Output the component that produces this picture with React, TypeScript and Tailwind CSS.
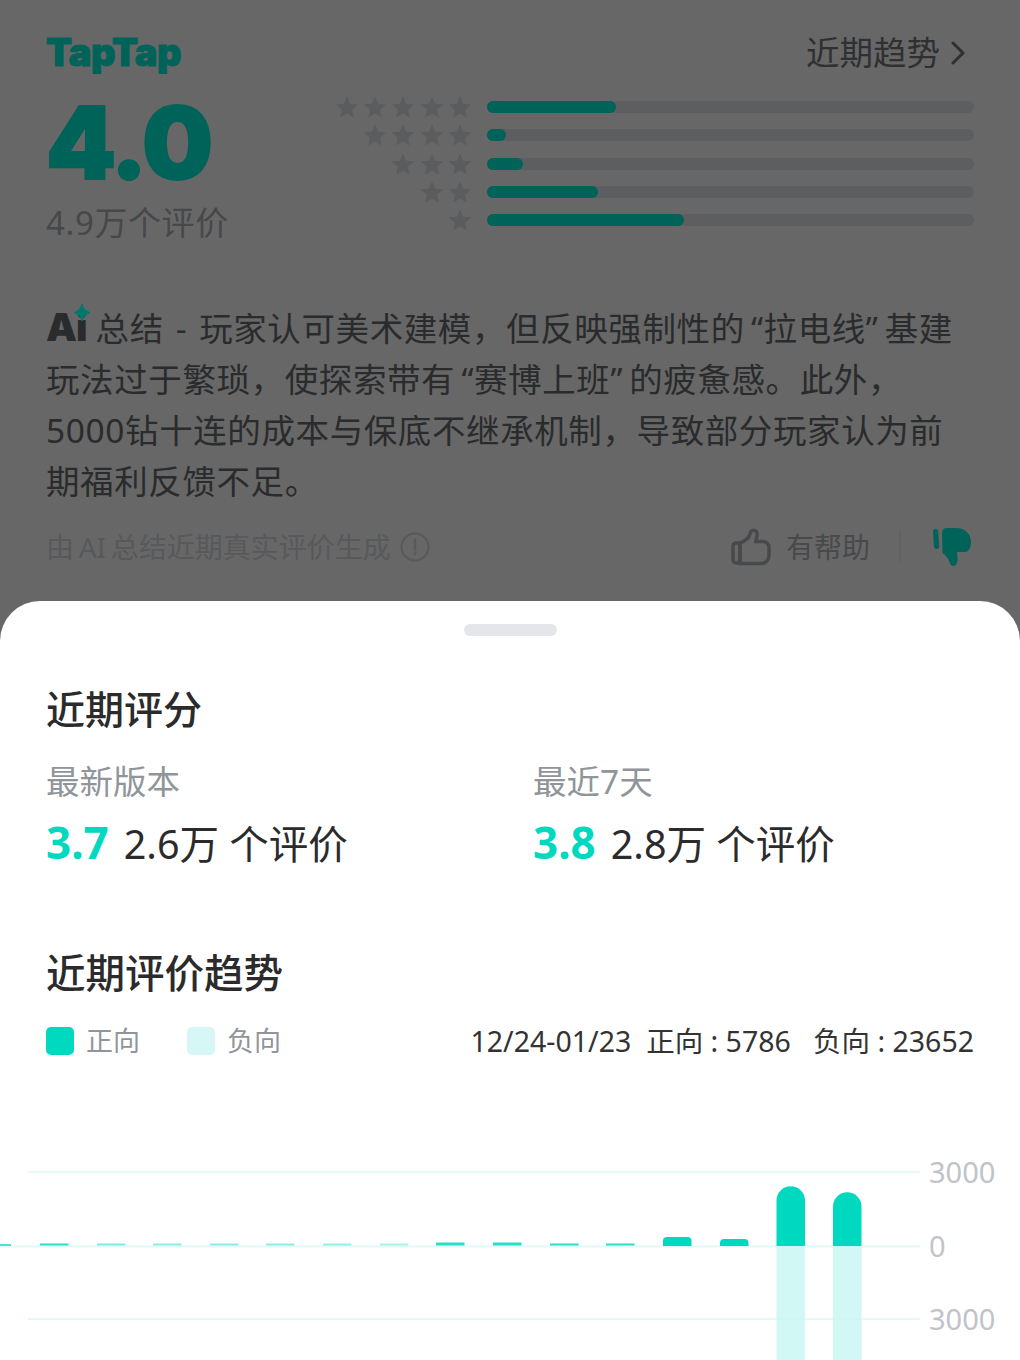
import React from 'react';

const font = 'font-["Noto_Sans","Noto_Sans_CJK_SC",sans-serif]';

const ratingRows = [
  { stars: 5, fill: 129 },
  { stars: 4, fill: 19 },
  { stars: 3, fill: 36 },
  { stars: 2, fill: 111 },
  { stars: 1, fill: 197 },
];

// thin bars along the zero line (y 105 in the svg)
const bars = [
  { x: 40, h: 2, o: 0.85 },
  { x: 97, h: 2, o: 0.5 },
  { x: 153, h: 2, o: 0.45 },
  { x: 210, h: 2, o: 0.45 },
  { x: 266, h: 2, o: 0.45 },
  { x: 323, h: 2, o: 0.4 },
  { x: 380, h: 2, o: 0.35 },
  { x: 436, h: 3, o: 0.85 },
  { x: 493, h: 3, o: 0.85 },
  { x: 550, h: 2, o: 0.85 },
  { x: 606, h: 2, o: 0.85 },
];

const Star: React.FC = () => (
  <svg width="24" height="22" viewBox="0 0 24 22" className="shrink-0">
    <path
      d="M12 0.5l3.2 7.2 7.8.8-5.9 5.2 1.7 7.7L12 17.4l-6.800 4 1.700-7.700L1 8.500l7.800-.8z"
      fill="#5b5c5e"
    />
  </svg>
);

const Chart: React.FC = () => (
  <svg width="1020" height="220" viewBox="0 0 1020 220" className="block">
    <line x1="28" y1="31" x2="920" y2="31" stroke="#e6fbf9" strokeWidth="2" />
    <line x1="0" y1="105.500" x2="920" y2="105.500" stroke="#e0faf7" strokeWidth="2" />
    <rect x="0" y="103" width="11" height="2" fill="#00d9c0" opacity="0.7" />
    {bars.map((b) => (
      <rect key={b.x} x={b.x} y={104.500 - b.h} width="28.500" height={b.h} fill="#00d9c0" opacity={b.o} />
    ))}
    <path d="M663 105v-5a4 4 0 0 1 4-4h20.500a4 4 0 0 1 4 4v5z" fill="#00d9c0" />
    <path d="M720 105v-3a4 4 0 0 1 4-4h20.500a4 4 0 0 1 4 4v3z" fill="#00d9c0" />
    <path d="M776.500 105V59.500a14.250 14.250 0 0 1 28.500 0V105z" fill="#00d9c0" />
    <path d="M833 105V65.500a14.250 14.250 0 0 1 28.500 0V105z" fill="#00d9c0" />
    <rect x="776.500" y="105" width="28.500" height="115" fill="#d2f8f5" />
    <rect x="833" y="105" width="28.500" height="115" fill="#d2f8f5" />
    <line x1="28" y1="178" x2="920" y2="178" stroke="#c9f5f1" strokeOpacity="0.5" strokeWidth="2" />
    <text x="929" y="42" fontSize="29" fill="#c0c3c8">3000</text>
    <text x="929" y="116" fontSize="29" fill="#c0c3c8">0</text>
    <text x="929" y="189" fontSize="29" fill="#c0c3c8">3000</text>
  </svg>
);

export default function App() {
  return (
    <div className={`${font} flex h-[1360px] w-[1020px] flex-col overflow-hidden bg-[#676767]`}>
      {/* dimmed card behind the sheet */}
      <div className="h-[601px] shrink-0 px-[46px] pt-[27px]">
        <div className="flex h-[52px] items-center justify-between">
          <span className="-mt-[2px] font-['Inter',sans-serif] text-[38px] font-black leading-none tracking-[-0.500px] text-[#00635a] [-webkit-text-stroke:1px_#00635a]">
            TapTap
          </span>
          <span className="mr-[9px] flex items-center gap-[11px] text-[33.500px] leading-none text-[#2f3031]">
            近期趋势
            <svg width="14" height="26" viewBox="0 0 14 26" fill="none">
              <path d="M2 3l10 10L2 23" stroke="#2f3031" strokeWidth="3" strokeLinecap="round" strokeLinejoin="round" />
            </svg>
          </span>
        </div>

        <div className="flex justify-between">
          <div className="w-[280px]">
            <div className="mt-[14px] font-['Inter',sans-serif] text-[100px] font-black leading-[100px] tracking-[-2.500px] text-[#00635a] [-webkit-text-stroke:2px_#00635a]">
              4.0
            </div>
            <div className="mt-[9px] text-[33px] leading-[42px] tracking-[0.600px] text-[#47484a]">4.9万个评价</div>
          </div>
          <div className="mt-[17px] flex w-[640px] flex-col gap-[6px]">
            {ratingRows.map((row) => (
              <div key={row.stars} className="flex h-[22.300px] items-center justify-end">
                <div className="flex gap-[4.300px]">
                  {Array.from({ length: row.stars }).map((_, i) => (
                    <Star key={i} />
                  ))}
                </div>
                <div className="ml-[15px] h-[12px] w-[487px] shrink-0 rounded-full bg-[#5d5e60]">
                  <div className="h-full rounded-full bg-[#00635a]" style={{ width: row.fill }} />
                </div>
              </div>
            ))}
          </div>
        </div>

        <div className="mt-[59px] text-[33.500px] leading-[51px] tracking-[0.600px] text-[#2a2b2c]">
          <span className="relative mr-[9px] inline-block font-['Inter',sans-serif] text-[39px] font-black leading-none tracking-[-1px]">
            Ai
            <svg width="16" height="17" viewBox="0 0 16 17" className="absolute -right-[3px] -top-[3px]">
              <path d="M8 0c.800 4 3 6.500 8 8.500-5 2-7.200 4.500-8 8.500-.800-4-3-6.500-8-8.500C5 6.500 7.200 4 8 0z" fill="#00796d" stroke="#00796d" />
            </svg>
          </span>
          总结<span className="mx-[12px]">-</span>玩家认可美术建模，但反映强制性的{'\u2009'}“拉电线”{'\u2009'}基建
          <br />
          玩法过于繁琐，使探索带有{'\u2009'}“赛博上班”{'\u2009'}的疲惫感。此外，
          <br />
          5000钻十连的成本与保底不继承机制，导致部分玩家认为前
          <br />
          期福利反馈不足。
        </div>

        <div className="mt-[20px] flex items-center justify-between">
          <div className="flex items-center gap-[9px] text-[28px] leading-[40px] text-[#58595b]">
            由{'\u2009'}AI{'\u2009'}总结近期真实评价生成
            <svg width="30" height="30" viewBox="0 0 30 30" fill="none">
              <circle cx="15" cy="15" r="13.500" stroke="#58595b" strokeWidth="2" />
              <path d="M15 8v9M15 20.500v1.500" stroke="#58595b" strokeWidth="2.500" strokeLinecap="round" />
            </svg>
          </div>
          <div className="mr-[2px] flex items-center">
            <svg width="40" height="38" viewBox="0 0 40 38" fill="none" stroke="#48494b" strokeWidth="3.500" strokeLinejoin="round" strokeLinecap="round">
              <path d="M9 15H5a3 3 0 0 0-3 3v14a3 3 0 0 0 3 3h4z" />
              <path d="M9 15c5-2 9-5 10-9 .600-3 3-4.500 5-3.500 2.500 1.200 2.500 5 1 9.500l-.5 1.500H32a6 6 0 0 1 6 6v8a8 8 0 0 1-8 8H9z" />
            </svg>
            <span className="ml-[15px] text-[28px] leading-none text-[#48494b]">有帮助</span>
            <div className="ml-[29px] h-[32px] w-[2px] bg-[#606163]" />
            <svg width="40" height="38" viewBox="0 0 40 38" className="ml-[31px]" fill="#00635a">
              <path d="M1 3.500C1 1.800 2.200 1 3.500 1S6 1.800 6.200 3.500l1 15c0 1.500-1 2.500-2.500 2.500S2 20 2 18.500z" />
              <path d="M10 5c0-3 2-5 5-5h9c9 0 15 6 15 14 0 4-1 7-3 9-1 1-3 1-5 1h-6l.5 6c.3 5-1.500 8-4 8-2 0-3-1-4-4-1.500-4-4-7-7-9z" />
            </svg>
          </div>
        </div>
      </div>

      {/* bottom sheet */}
      <div className="flex-1 rounded-t-[40px] bg-white">
        <div className="mx-auto mt-[23px] h-[12px] w-[93px] rounded-full bg-[#e4e6ea]" />
        <div className="px-[46px]">
          <h2 className="mt-[48px] text-[39px] font-medium leading-[50px] text-[#2b2b2b]">近期评分</h2>
          <div className="mt-[25px] flex">
            <div className="w-[487px]">
              <div className="text-[33.500px] leading-[44px] text-[#90959a]">最新版本</div>
              <div className="mt-[11px] flex items-baseline text-[39.500px] leading-[56px] text-[#2b2b2b]">
                <span className="mr-[15px] text-[44px] font-bold text-[#00d9c0]">3.7</span>
                2.6万 个评价
              </div>
            </div>
            <div>
              <div className="text-[33.500px] leading-[44px] text-[#90959a]">最近7天</div>
              <div className="mt-[11px] flex items-baseline text-[39.500px] leading-[56px] text-[#2b2b2b]">
                <span className="mr-[15px] text-[44px] font-bold text-[#00d9c0]">3.8</span>
                2.8万 个评价
              </div>
            </div>
          </div>

          <h2 className="mt-[76px] text-[39.500px] font-medium leading-[50px] text-[#2b2b2b]">近期评价趋势</h2>
          <div className="mt-[23px] flex items-center justify-between">
            <div className="flex items-center text-[27px] leading-[40px] text-[#90959a]">
              <span className="h-[28px] w-[28px] rounded-[5px] bg-[#00d9c0]" />
              <span className="ml-[12px]">正向</span>
              <span className="ml-[47px] h-[28px] w-[28px] rounded-[5px] bg-[#d5f8f6]" />
              <span className="ml-[12px]">负向</span>
            </div>
            <div className="text-[28.500px] leading-[40px] text-[#333333]">
              12/24-01/23&nbsp; 正向 : 5786&nbsp; &nbsp;负向 : 23652
            </div>
          </div>
        </div>
        <div className="mt-[80px]">
          <Chart />
        </div>
      </div>
    </div>
  );
}
